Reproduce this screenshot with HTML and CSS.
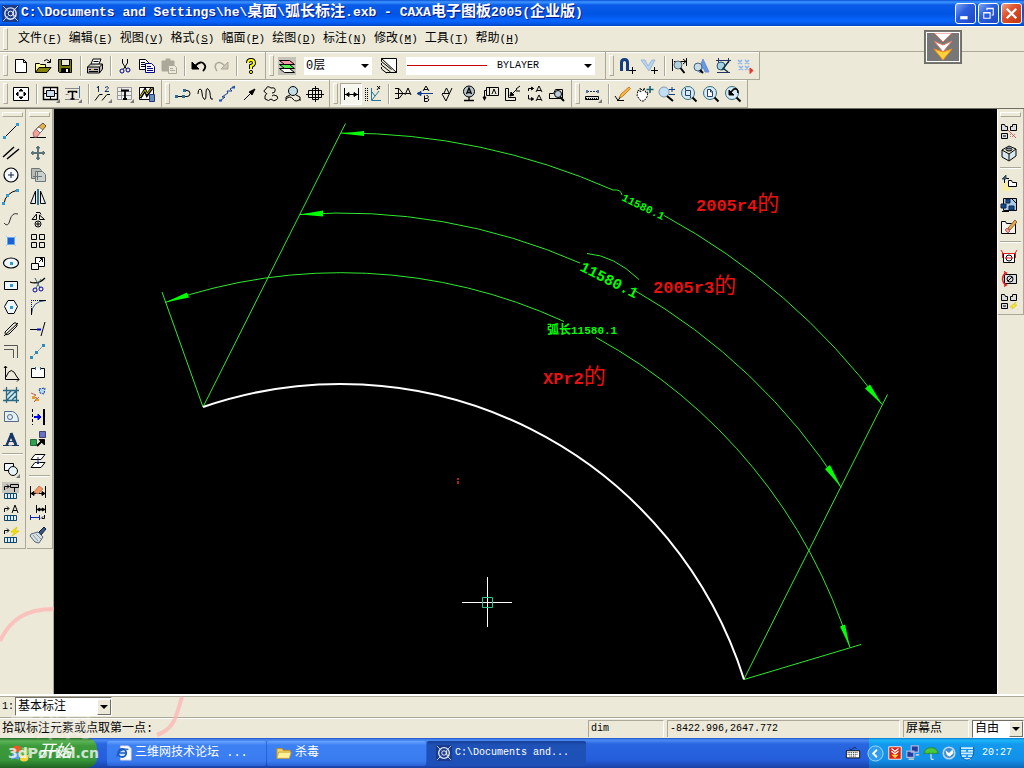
FILE: index.html
```html
<!DOCTYPE html>
<html lang="zh-CN">
<head>
<meta charset="utf-8">
<title>CAXA电子图板2005(企业版)</title>
<link rel="stylesheet" href="styles.css">
</head>
<body>
<div class="app">
<header class="titlebar">
  <svg class="logo" viewBox="0 0 18 18"><rect width="18" height="18" fill="#1a3a8a" stroke="none"/><path d="M1 1l5 5M17 1l-5 5M1 17l5-5M17 17l-5-5" stroke="#c8d4f0"/><circle cx="9" cy="9" r="6" stroke="#dfe6fa" stroke-width="1.500"/><circle cx="9" cy="9" r="2.500" stroke="#fff"/><path d="M12 6v5l3 1" stroke="#fff"/></svg>
  <h1>C:\Documents and Settings\he\<span>桌面</span>\<span>弧长标注</span>.exb - CAXA<span>电子图板</span>2005(<span>企业版</span>)</h1>
  <div class="winbtns">
    <button aria-label="最小化"><svg viewBox="0 0 18 18"><path d="M4 13h7" stroke="#fff" stroke-width="3"/></svg></button>
    <button aria-label="还原"><svg viewBox="0 0 18 18"><path d="M4.500 8.500h6v5h-6zM4 8h7M7.500 6V4.500h6v6H12M7 4h7" stroke="#fff"/></svg></button>
    <button class="close" aria-label="关闭"><svg viewBox="0 0 18 18"><path d="M4.500 4.500l9 9M13.500 4.500l-9 9" stroke="#fff" stroke-width="2.200"/></svg></button>
  </div>
</header>

<nav class="menubar">
  <button>文件<i>(<u>F</u>)</i></button><button>编辑<i>(<u>E</u>)</i></button><button>视图<i>(<u>V</u>)</i></button><button>格式<i>(<u>S</u>)</i></button><button>幅面<i>(<u>P</u>)</i></button><button>绘图<i>(<u>D</u>)</i></button><button>标注<i>(<u>N</u>)</i></button><button>修改<i>(<u>M</u>)</i></button><button>工具<i>(<u>T</u>)</i></button><button>帮助<i>(<u>H</u>)</i></button>
</nav>

<div class="toolrow">
  <div class="toolbar">
    <button aria-label="新建"><svg viewBox="0 0 18 18"><path d="M3.500 2.500h8l3 3v10h-11zM11.500 2.500v3h3" fill="#fff"/></svg></button>
    <button aria-label="打开"><svg viewBox="0 0 18 18"><path d="M1.500 15V6.500h4l1 1h5V10" fill="#ffff9c"/><path d="M1.500 15.500L5 10.500h12l-4 5z" fill="#848200"/><path d="M10 4q3-3 5 0l1 1M16.500 2v3.500H13"/></svg></button>
    <button aria-label="保存"><svg viewBox="0 0 18 18"><path d="M2.500 2.500h13v13h-12l-1-1z" fill="#7b7b00"/><path d="M5.500 2.500h8v6h-8z" fill="#ece9d8"/><path d="M5.500 11.500h8v4h-8z" fill="#000"/><path d="M11 12v3" stroke="#fff" stroke-width="2"/></svg></button>
    <b class="sep"></b>
    <button aria-label="打印"><svg viewBox="0 0 18 18"><path d="M5 7l2-5h8l-2 5" fill="#fff"/><path d="M1.500 10l3-3h12v5l-3 4h-12zM1.500 10h12l3-3M13.500 10v6" fill="#bbb"/><path d="M3 12.500h9M7.500 4.500h5M3 14.500h9"/><path d="M5 12.500h3" stroke="#ec0"/></svg></button>
    <b class="sep"></b>
    <button aria-label="剪切"><svg viewBox="0 0 18 18"><path d="M6.500 2v4l4 6M11.500 2v4l-4 6"/><circle cx="6" cy="14" r="2" stroke="#008"/><circle cx="12" cy="13" r="2" stroke="#008"/></svg></button>
    <button aria-label="复制"><svg viewBox="0 0 18 18"><path d="M1.500 2.500h6l3 3v7h-9z" fill="#fff"/><path d="M3 5.500h4M3 7.500h5M3 9.500h5"/><path d="M7.500 6.500h6l3 3v6h-9z" fill="#fff" stroke="#008"/><path d="M9 9.500h4M9 11.500h6M9 13.500h6" stroke="#008"/></svg></button>
    <button aria-label="粘贴" disabled><svg viewBox="0 0 18 18"><path d="M2 4h12v10H2zM6 2h4v3H6z" fill="#aca899" stroke="#aca899"/><path d="M8.500 8.500h6l2 2v6h-8z" fill="#ece9d8" stroke="#aca899"/><path d="M10 11.500h3M10 13.500h5" stroke="#aca899"/></svg></button>
    <b class="sep"></b>
    <button aria-label="撤销"><svg viewBox="0 0 18 18"><path d="M5 9q6-6 9-2 3 3-1 7" stroke-width="1.800"/><path d="M2 5v7h7z" fill="#000"/></svg></button>
    <button aria-label="重做" disabled><svg viewBox="0 0 18 18"><path d="M13 9Q7 3 4 7q-2 3 1 7" stroke="#aca899" stroke-width="1.500"/><path d="M16 5v7H9z" fill="#ccc8b8" stroke="#aca899"/></svg></button>
    <b class="sep"></b>
    <button aria-label="帮助"><svg viewBox="0 0 18 18"><path d="M6 6q0-3 3-3t3 3q0 2-3 3v3" stroke-width="4"/><path d="M6 6q0-3 3-3t3 3q0 2-3 3v3" stroke="#ff0" stroke-width="2"/><circle cx="9" cy="15" r="1.600" fill="#ff0"/></svg></button>
  </div>
  <div class="toolbar">
    <button aria-label="图层"><svg viewBox="0 0 18 18"><path d="M0 0h18v18H0z" fill="#c5c2b8" stroke="none"/><path d="M1.500 11.500h10l5 4h-10z" fill="#fff"/><path d="M1.500 7.500h10l5 4h-10z" fill="#5e5"/><path d="M1.500 3.500h10l5 4h-10z" fill="#f9a"/></svg></button>
    <span class="combo layer"><select aria-label="当前层"><option>0层</option></select><span class="arrow"></span></span>
    <button aria-label="线型"><svg viewBox="0 0 18 18"><path d="M1.500 1.500h15v14z" fill="#fff"/><path d="M1.500 1.500v3l10 8M1.500 6v2l9 7M1.500 10v2l5 4M6 15.500h10.500"/></svg></button>
    <span class="combo line"><select aria-label="当前线型"><option>BYLAYER</option></select><span class="sample"></span><span class="arrow"></span></span>
  </div>
  <div class="toolbar">
    <button aria-label="捕捉设置"><svg viewBox="0 0 18 18"><path d="M3.500 14V5.500q0-3 3-3t3 3V14" stroke="#123c80" stroke-width="3"/><path d="M14.500 10v7M11 13.500h7"/></svg></button>
    <button aria-label="拾取过滤"><svg viewBox="0 0 18 18"><path d="M1 3h4l3 6 4-6h3l-6 11z" fill="#b8d4f2" stroke="#9ab8d8"/><path d="M14.500 10v7M11 13.500h7"/></svg></button>
    <b class="sep"></b>
    <button aria-label="标注风格"><svg viewBox="0 0 18 18"><path d="M2.500 2v12M16.500 1v8M4 4.500h12M13 2l3 2.500-3 2.500"/><circle cx="8" cy="8" r="4" fill="#b4d0dc" stroke="#567"/><path d="M10.500 11l4 5" stroke-width="2"/></svg></button>
    <button aria-label="文本风格"><svg viewBox="0 0 18 18"><path d="M6 14l5-12 6 13h-4l-2-5-3 6z" fill="#6c96dd" stroke="#6a90d8"/><circle cx="6" cy="10" r="4" fill="#c5dce8" stroke="#467"/><path d="M8 13l3 3" stroke-width="2"/></svg></button>
    <button aria-label="剖面图案"><svg viewBox="0 0 18 18"><path d="M2 3.500h15M3 15.500h13M4.500 1v5M14.500 1v5" stroke="#236"/><circle cx="7" cy="9" r="4" fill="#a9d3df" stroke="#257"/><path d="M15 4L8 13M10 12l4 3" stroke-width="1.500" stroke="#134"/></svg></button>
    <button aria-label="点样式"><svg viewBox="0 0 18 18"><path d="M2 3l4 4M6 3L2 7M9 3l4 4M13 3L9 7M3 9l4 4M7 9l-4 4M9 9l4 4M13 9l-4 4" stroke="#8fb6ee" stroke-width="1.700"/><path d="M14 11l3 2.500-3 3z" fill="#e32" stroke="#e32"/></svg></button>
  </div>
</div>

<div class="toolrow">
  <div class="toolbar">
    <button aria-label="图幅设置"><svg viewBox="0 0 18 18"><path d="M1.500 2.500h15v13h-15z" fill="#fff"/><path d="M7 6l2-2 2 2zM7 12l2 2 2-2zM6 7L4 9l2 2zM12 7l2 2-2 2z" fill="#000"/></svg></button>
    <b class="sep"></b>
    <button aria-label="调入图框"><svg viewBox="0 0 18 18"><path d="M1.500 2.500h14v12h-14z" fill="#fff" stroke-width="1.500"/><path d="M8.500 2v4M8.500 11v4M1 8.500h4M12 8.500h4"/><path d="M4.500 5.500h8v6h-8z" fill="#cde"/><path d="M14 18h4v-4z" fill="#777" stroke="none"/></svg></button>
    <button aria-label="标题栏"><svg viewBox="0 0 18 18"><path d="M1 3.500h14M1 14.500h14M1.500 9.500h3" stroke="#888"/><path d="M4 6.500h9M8.500 6v8M6.500 14h4M4.500 6v2M12.500 6v2" stroke-width="1.600"/><path d="M15.500 1v12" stroke="#47a"/><path d="M14 18h4v-4z" fill="#777" stroke="none"/></svg></button>
    <b class="sep"></b>
    <button aria-label="零件序号"><svg viewBox="0 0 18 18"><path d="M4.500 1v6M3 3l1.500-2M11 2.500q4-2 3 1l-3 3h4" stroke="#136"/><path d="M1 15.500L5.500 9.500h3M8 15.500l5-6h3"/><path d="M14 18h4v-4z" fill="#777" stroke="none"/></svg></button>
    <button aria-label="明细表"><svg viewBox="0 0 18 18"><path d="M1.500 2.500h14v12h-14zM1 6.500h15M1 10.500h15M5.500 2v12" fill="#eee" stroke="#999"/><path d="M5 5.500h8M9 5v9M7 14h4" stroke-width="1.800"/><path d="M14 18h4v-4z" fill="#777" stroke="none"/></svg></button>
    <button aria-label="背景设置"><svg viewBox="0 0 18 18"><path d="M1.500 2.500h14v12h-14z" fill="#fff"/><path d="M2 13l5-8 2 5 5-7" stroke-width="3"/><path d="M2 12l5-7 2 4 5-6" stroke="#d8d020"/><path d="M11.500 9.500h5v7h-5z" fill="#678fbd" stroke="#237"/></svg></button>
  </div>
  <div class="toolbar">
    <button aria-label="公切线"><svg viewBox="0 0 18 18"><path d="M2 11.500h11q3 0 3-3t-3-3H9"/><path d="M1 10h3v3H1zM8 10h3v3H8zM9 4h3v3H9z" fill="#2a6f9a" stroke="none"/></svg></button>
    <button aria-label="波浪线"><svg viewBox="0 0 18 18"><path d="M2 9q0-5 2-5t2 4 2 6 2-5 2-5 2 4 1 6h2"/></svg></button>
    <button aria-label="双折线"><svg viewBox="0 0 18 18"><path d="M2 16l5-4H4l6-4-1-2 5 0-2-2 5-3" stroke="#123c90"/><path d="M1 15.500h3M14 2.500h3" stroke="#2453b4" stroke-width="2"/></svg></button>
    <button aria-label="箭头"><svg viewBox="0 0 18 18"><path d="M4 15l8-8"/><path d="M15 4l-3 6-3-3z" fill="#000"/></svg></button>
    <button aria-label="云线"><svg viewBox="0 0 18 18"><path d="M4 8Q0 6 4 4q1-4 5-1 5-1 4 3 0 2-3 2M5 8q-3 3-2 6 4 3 6 0 3 3 5 1 3-1 1-4-4-2-5 0"/></svg></button>
    <button aria-label="局部放大"><svg viewBox="0 0 18 18"><circle cx="9" cy="6" r="4.500" fill="#c2dce8"/><path d="M6 10l-4 2v4M12 10l4 2v4M2 14q4-4 7 0t7 0"/></svg></button>
    <button aria-label="轴孔"><svg viewBox="0 0 18 18"><path d="M2.500 5.500h13v7h-13zM6.500 3.500h6v11h-6z"/><path d="M0 9.500h18M9.500 1v16"/></svg></button>
  </div>
  <div class="toolbar">
    <button class="on" aria-label="尺寸标注"><svg viewBox="0 0 18 18"><path d="M2.500 3v12M16.500 3v12M3 9.500h13"/><path d="M4 9.500l3-2v4zM15 9.500l-3-2v4z" fill="#000"/></svg></button>
    <button aria-label="坐标标注"><svg viewBox="0 0 18 18"><path d="M1.500 3v13M3.500 3v13" stroke-dasharray="1 1"/><path d="M7.500 3v12.500H17M8 15l7-9M8 7l3 4" stroke="#27779c"/><path d="M13 1l3 3M16 1l-3 4"/></svg></button>
    <b class="sep"></b>
    <button aria-label="倒角标注"><svg viewBox="0 0 18 18"><path d="M1 3.500h4l4 5-4 5H1M4.500 3v11M1 8.500h10M11 10l3-7 3 7M12 8.500h4"/></svg></button>
    <button aria-label="引出说明"><svg viewBox="0 0 18 18"><path d="M2 8.500h15" stroke="#123c90"/><path d="M1 8.500l4-2v4z" fill="#123c90" stroke="#123c90"/><path d="M7 6l3-5 3 5M8 4.500h4M8.500 10.500v6h3q3-2 0-3 2-3-1-3M8 13.500h3"/></svg></button>
    <button aria-label="粗糙度"><svg viewBox="0 0 18 18"><path d="M4 8.500h7M4 9l4 7 6-13M6 8l2.500-5L11 8"/></svg></button>
    <button aria-label="基准代号"><svg viewBox="0 0 18 18"><circle cx="9" cy="6.500" r="5.500" fill="#b5c3cb"/><path d="M6.500 9L9 3l2.500 6M7 7.500h4M9 12v3M4 15.500h10" stroke-width="1.300"/></svg></button>
    <button aria-label="形位公差"><svg viewBox="0 0 18 18"><path d="M4.500 2.500h12v8h-12zM7.500 10V3M10 9l2-5 2 5M4 5.500H2.500v10"/><path d="M1 12l1.500 3L4 12z" fill="#000"/></svg></button>
    <button aria-label="焊接符号"><svg viewBox="0 0 18 18"><path d="M1.500 3.500v12h10v-3h-7v-9zM7 10l6-6M12 4l4-3M12 6h4"/><path d="M6 11l1-4 3 3z" fill="#000"/></svg></button>
    <button aria-label="剖切符号"><svg viewBox="0 0 18 18"><path d="M2.500 6V3.500h5M2.500 10v4h5M10 7l3-6 3 6M11 5.500h4M10 16l3-6 3 6M11 14.500h4"/><path d="M5.500 2l2 1.500-2 1.500zM5.500 12.500l2 1.500-2 1.500z" fill="#000"/></svg></button>
    <button aria-label="标注编辑"><svg viewBox="0 0 18 18"><path d="M1.500 13.500v-5h4l2-4h7v9M1 13.500h12"/><circle cx="10" cy="9" r="3.500" fill="#bcd"/><path d="M12 12l4 4" stroke-width="2"/></svg></button>
  </div>
  <div class="toolbar">
    <button aria-label="查询"><svg viewBox="0 0 18 18"><path d="M3 6.500h11" stroke-dasharray="2 1" stroke="#135"/><path d="M2 5h2v3H2zM13 5h2v3h-2z" fill="#579" stroke="none"/><path d="M1.500 11.500h13v3h-13z" fill="#ddd"/><path d="M2 13.500h12" stroke-dasharray="1 1"/><path d="M14 18h4v-4z" fill="#777" stroke="none"/></svg></button>
    <b class="sep"></b>
    <button aria-label="重画"><svg viewBox="0 0 18 18"><path d="M5 13l2-4 8-7 1.500 1.500-8 8z" fill="#ffb638" stroke="#c08030"/><path d="M1 11l3 4.500 2-3M3 15.500h7"/></svg></button>
    <button aria-label="平移"><svg viewBox="0 0 18 18"><path d="M2 5l3 2-1-4 3 3 1-3 2 5 2-1-1 5-3 4H5l-4-5z" fill="#fff" stroke-dasharray="2 1"/><path d="M14 1v7M10.500 4.500h7" stroke="#176070" stroke-width="1.600"/></svg></button>
    <button aria-label="动态缩放"><svg viewBox="0 0 18 18"><circle cx="6" cy="7" r="5" fill="#c2def4" stroke="#89a"/><path d="M9 11l6 5" stroke-width="2"/><path d="M11 4.500h6M14 2v5M11 9.500h6" stroke="#113c80"/></svg></button>
    <button aria-label="窗口放大"><svg viewBox="0 0 18 18"><circle cx="8" cy="8" r="6.500" fill="#d8eaf5" stroke="#357080"/><path d="M5.500 5.500h5v5h-5zM5.500 5V3M10.500 11v2" stroke="#246"/><path d="M12.500 12.500l4 4" stroke-width="2"/></svg></button>
    <button aria-label="显示全部"><svg viewBox="0 0 18 18"><circle cx="8" cy="8" r="6.500" fill="#d8eaf5" stroke="#357080"/><path d="M5.500 4.500h3l2 2v5h-5zM8.500 4v3h2" fill="#fff" stroke="#246"/><path d="M12.500 12.500l4 4" stroke-width="2"/></svg></button>
    <button aria-label="显示回溯"><svg viewBox="0 0 18 18"><circle cx="8" cy="8" r="6.500" fill="#d8eaf5" stroke="#357080"/><path d="M6 8l4-4q4-1 4 4" stroke-width="1.600"/><path d="M5 5v5h5z" fill="#000"/><path d="M12.500 12.500l4 4" stroke-width="2"/></svg></button>
  </div>
</div>

<main class="work">
  <div class="side">
    <div class="column">
      <button aria-label="直线"><svg viewBox="0 0 18 18"><path d="M3 15L15 3"/><path d="M1 14h3v3H1zM14 1h3v3h-3z" fill="#2e9bd8" stroke="none"/></svg></button>
      <button aria-label="平行线"><svg viewBox="0 0 18 18"><path d="M1 13L12 3M5 15L17 5" stroke-width="1.500"/></svg></button>
      <button aria-label="圆"><svg viewBox="0 0 18 18"><circle cx="9" cy="9" r="7" fill="#f7fbff" stroke-width="1.200"/><path d="M9 6v6M6 9h6" stroke="#124"/></svg></button>
      <button aria-label="圆弧"><svg viewBox="0 0 18 18"><path d="M2 16Q3 5 16 2"/><path d="M0 14h3v3H0zM4 6h3v3H4zM14 1h3v3h-3z" fill="#2e9bd8" stroke="none"/></svg></button>
      <button aria-label="样条"><svg viewBox="0 0 18 18"><path d="M2 13q4 5 6-3t8-6" stroke="#333"/></svg></button>
      <button aria-label="点"><svg viewBox="0 0 18 18"><path d="M4 4l10 10M14 4L4 14" stroke="#9cc8f2"/><path d="M5.500 5.500h7v7h-7z" fill="#1762d6" stroke="#69a8ee"/></svg></button>
      <button aria-label="椭圆"><svg viewBox="0 0 18 18"><ellipse cx="9" cy="9" rx="7.500" ry="5" fill="#eef7ff" stroke-width="1.200"/><path d="M8 8h3v3H8z" fill="#39c" stroke="none"/></svg></button>
      <button aria-label="矩形"><svg viewBox="0 0 18 18"><path d="M2.500 5.500h13v8h-13z" fill="#eef7ff"/><path d="M8 8h3v3H8z" fill="#39c" stroke="none"/></svg></button>
      <button aria-label="正多边形"><svg viewBox="0 0 18 18"><path d="M6 2.500h6l3.500 6-3.500 7H6l-3.500-7z" fill="#eef7ff"/><path d="M8 8h3v3H8z" fill="#39c" stroke="none"/></svg></button>
      <button aria-label="中心线"><svg viewBox="0 0 18 18"><path d="M3 12l9-9q3-1 3 3l-8 8q-4 2-4-2zM2 16L16 3"/></svg></button>
      <button aria-label="等距线"><svg viewBox="0 0 18 18"><path d="M2 3.500h13.500V16M2 7.500h9.500V16" stroke="#555"/></svg></button>
      <button aria-label="公式曲线"><svg viewBox="0 0 18 18"><path d="M3.500 2v13.500H17M4 13q5-13 11 0M2 4l1.500-2L5 4M15 13l2 2.500-2 2"/></svg></button>
      <button aria-label="剖面线"><svg viewBox="0 0 18 18"><path d="M4 4h11v10H4z" fill="#cfe9ef" stroke="none"/><path d="M1 4.500h16M1 14.500h16M4.500 1v16M14.500 1v16M5 9l4-4M5 14l9-9M10 14l4-4" stroke="#2c6680" stroke-width="1.300"/></svg></button>
      <button aria-label="填充"><svg viewBox="0 0 18 18"><path d="M2.500 3.500h8q6 2 6 10h-14z" fill="#e4f1f4" stroke="#568"/><circle cx="8" cy="9" r="2.500" stroke="#568"/></svg></button>
      <button aria-label="文字"><svg viewBox="0 0 18 18"><path d="M4 15L9 3l5 12z" fill="#173568" stroke="#173568"/><path d="M6 15l3-7 1.500 3h-3l5 0 .5 4z" fill="#ece9d8" stroke="none"/><path d="M6 11.500h6" stroke="#173568"/><path d="M1 15.500h6M10 15.500h7" stroke="#173568"/><path d="M9 3l5 12" stroke="#173568" stroke-width="3"/></svg></button>
      <b class="rule"></b>
      <button aria-label="块生成"><svg viewBox="0 0 18 18"><path d="M2.500 3.500h9v7h-9z" fill="#eef7ff"/><circle cx="11" cy="11" r="4.500" fill="#e5f2f8"/><path d="M14 18h4v-4z" fill="#777" stroke="none"/></svg></button>
      <button aria-label="块消隐"><svg viewBox="0 0 18 18"><path d="M0 0h17v11H0z" fill="#c9c7bd" stroke="none"/><path d="M2.500 8V4.500h5M5 2.500l2 2-2 2M8.500 2.500h8v3h-8zM12.500 6v4"/><path d="M2.500 11.500h12v5h-12z" fill="#def" stroke="#146"/><path d="M5.500 12v4M8.500 12v4M11.500 12v4" stroke="#147"/></svg></button>
      <button aria-label="块属性"><svg viewBox="0 0 18 18"><path d="M2.500 8V4.500h4M5 2.500l2 2-2 2M10 9l3-8 3 8M11 6.500h4"/><path d="M2.500 11.500h12v5h-12z" fill="#def" stroke="#146"/><path d="M5.500 12v4M8.500 12v4M11.500 12v4" stroke="#147"/></svg></button>
      <button aria-label="块编辑"><svg viewBox="0 0 18 18"><path d="M2.500 8V4.500h4M5 2.500l2 2-2 2"/><path d="M15 1l-6 5h4l-3 4 7-5h-4z" fill="#fe0" stroke="#dc0"/><path d="M2.500 11.500h12v5h-12z" fill="#def" stroke="#146"/><path d="M5.500 12v4M8.500 12v4M11.500 12v4" stroke="#147"/></svg></button>
    </div>
    <div class="column">
      <button aria-label="删除"><svg viewBox="0 0 18 18"><path d="M1 15.500h16"/><path d="M4 11l3-4 4 4-3 4H5z" fill="#f3a0a0" stroke="#a66"/><path d="M7 7l7-6 3 3-6 7z" fill="#e8b040" stroke="#654"/><path d="M7 7l3-2 4 3-3 3z" fill="#fff" stroke="#777"/></svg></button>
      <button aria-label="平移复制"><svg viewBox="0 0 18 18"><path d="M9 3v12M3 9h12" stroke="#5c7476" stroke-width="2"/><path d="M7 4l2-2 2 2zM7 14l2 2 2-2zM4 7L2 9l2 2zM14 7l2 2-2 2z" fill="#5c7476" stroke="#5c7476"/></svg></button>
      <button aria-label="复制选择"><svg viewBox="0 0 18 18"><path d="M2.500 2.500h8l2 2v8h-10z" fill="#b9bab2" stroke="#6b7678"/><path d="M6.500 5.500h7l3 3v7h-10z" fill="#ccd0ca" stroke="#6b7678"/><path d="M8.500 6v8M4 10.500h9" stroke="#6b7678"/></svg></button>
      <button aria-label="镜像"><svg viewBox="0 0 18 18"><path d="M6.500 3v12.500h-5zM11.500 3v12.500h5z" fill="#e8eef0"/><path d="M9 1v16" stroke="#27779c" stroke-width="2"/></svg></button>
      <button aria-label="旋转"><svg viewBox="0 0 18 18"><path d="M7.500 4v5.500H3zM10.500 5l5 4.500h-5zM7 2.500h4l1 2"/><circle cx="9" cy="14" r="3"/><path d="M7 14h4M9 12v4"/></svg></button>
      <button aria-label="阵列"><svg viewBox="0 0 18 18"><path d="M2.500 2.500h5v5h-5zM10.500 2.500h5v5h-5zM2.500 10.500h5v5h-5zM10.500 10.500h5v5h-5z"/></svg></button>
      <button aria-label="比例缩放"><svg viewBox="0 0 18 18"><path d="M6.500 3.500h9v9h-9z" fill="#fff"/><path d="M2.500 9.500h7v6h-7z" fill="#f4f4ee"/><path d="M10 8l3-3M11 4.500h2.500V8"/></svg></button>
      <button aria-label="裁剪"><svg viewBox="0 0 18 18"><path d="M1 6q8 3 15-4" stroke-width="1.300"/><path d="M6 2l5 10M12 3L7 12" stroke="#467"/><circle cx="6" cy="14" r="2" stroke="#00a"/><circle cx="12" cy="13" r="2" stroke="#00a"/></svg></button>
      <button aria-label="过渡"><svg viewBox="0 0 18 18"><path d="M2.500 2v7M2 2.500h7" stroke-dasharray="1 1" stroke="#00a"/><path d="M2.500 16Q3 3 17 2.500" stroke="#27558c"/><path d="M2.500 10v7M10 2.500h7"/></svg></button>
      <button aria-label="齐边"><svg viewBox="0 0 18 18"><path d="M1 9.500h7"/><path d="M8 9.500h4" stroke="#00d" stroke-width="2"/><path d="M12 16l4-14"/></svg></button>
      <button aria-label="拉伸"><svg viewBox="0 0 18 18"><path d="M2 16L15 3" stroke="#58a" stroke-dasharray="3 1"/><path d="M1 14h3v3H1zM6 9h3v3H6zM13 2h3v3h-3z" fill="#2e8bba" stroke="none"/></svg></button>
      <button aria-label="打断"><svg viewBox="0 0 18 18"><path d="M7 4.500H2.500v9h13v-9H11" fill="#fff"/><path d="M6.500 3v3M11.500 3v3" stroke="#27a"/></svg></button>
      <button aria-label="打散"><svg viewBox="0 0 18 18"><path d="M10 3l6-1-1 6-4-1z" fill="#adf" stroke="#23a" stroke-dasharray="2 1"/><path d="M2 7l5 2-3 2 4 1-3 4 5-5" stroke="#b66"/><path d="M3 10h3v3H3zM7 13h3v2H7z" fill="#e8a020" stroke="none"/></svg></button>
      <button aria-label="局部平移"><svg viewBox="0 0 18 18"><path d="M3.500 1v16" stroke-dasharray="3 2"/><path d="M15 1v16" stroke-width="2"/><path d="M5 9h4" stroke="#00e" stroke-width="2"/><path d="M9 6l3 3-3 3z" fill="#00e" stroke="#00e"/></svg></button>
      <button aria-label="改变颜色"><svg viewBox="0 0 18 18"><path d="M1.500 9.500h6v6h-6z" fill="#2fa04c" stroke="#264"/><path d="M10.500 1.500h6v6h-6z" fill="#6670c8" stroke="#446"/><path d="M8 16l5-5" stroke-width="2"/><path d="M10 9.500h5.500V15z" fill="#000"/></svg></button>
      <button aria-label="改变层"><svg viewBox="0 0 18 18"><path d="M6 2.500h10l-4 5H2zM6 10.500h10l-4 5H2z" fill="#fff"/><path d="M9 5v7M7 10l2 2 2-2" stroke="#238"/></svg></button>
      <b class="rule"></b>
      <button aria-label="标注修改"><svg viewBox="0 0 18 18"><path d="M1.500 4v12M16.500 4v12M2 11.500h14M2 11.500l3-2v4zM16 11.500l-3-2v4z" fill="#000"/><path d="M5 10l5-6 4 3-5 5z" fill="#ed9b62" stroke="#c75"/></svg></button>
      <button aria-label="尺寸驱动"><svg viewBox="0 0 18 18"><path d="M7.500 1v8M16.500 1v8M8 5.500h8M8 5.500l3-1.500v3zM16 5.500L13 4v3z" fill="#000"/><path d="M1.500 11v5M10.500 11v5M2 13.500h8" stroke="#12a"/><path d="M13 14.500h2.500V11M12 14.500l2-2"/></svg></button>
      <button aria-label="格式刷"><svg viewBox="0 0 18 18"><path d="M10 6l5-5 2 2-5 6z" fill="#37568a" stroke="#123"/><path d="M2 8l7-2 5 5-4 6-4-1-5-6z" fill="#d8dfe2" stroke="#567"/><path d="M4 9l5 6M7 8l5 5" stroke="#89a"/></svg></button>
    </div>
  </div>

  <svg class="canvas" viewBox="54 109 943 585" preserveAspectRatio="xMinYMin slice" role="img" aria-label="弧长标注">
    <g class="dims">
      <path d="M203 407L345.500 123.500M744 679L887.500 394.500M203 407L162 292M744 679.500L861 644.500"/>
      <path d="M341 133A673.700 673.700 0 0 1 613 190q8-1 9 5M664 215.500A673.700 673.700 0 0 1 882 404.500"/>
      <path d="M300 214.500A594 594 0 0 1 580 263M634 290A594 594 0 0 1 841 487.500M587 253.500q27 2 52 26"/>
      <path d="M165 302.500A534 534 0 0 1 564 321.500M596 337.500A534 534 0 0 1 850 647.500"/>
    </g>
    <g class="heads">
      <path d="M341 133.500l23-2.500v5zM882 404.500l-17-16 5-4zM300 214.500l23-4v6zM841 487l-16-18 5-4zM165 302.500l22-10 2 5zM850 647.500l-10-21 5-2z"/>
    </g>
    <path class="arc" d="M203 407A423 423 0 0 1 744 679.500"/>
    <text class="dim" transform="translate(621 200) rotate(26)">11580.1</text>
    <text class="dim big" transform="translate(579 270) rotate(27)">11580.1</text>
    <text class="dim" x="547" y="334"><tspan class="han">弧长</tspan>11580.1</text>
    <text class="note" x="696" y="211">2005r4<tspan>的</tspan></text>
    <text class="note" x="653" y="293">2005r3<tspan>的</tspan></text>
    <text class="note" x="543" y="384">XPr2<tspan>的</tspan></text>
    <path class="mark" d="M457 478h2v2h-2zM457 481h2v3h-2z"/>
    <path class="cross" d="M487.500 577v50M462 602.500h50"/>
    <path class="pick" d="M482.500 597.500h10v10h-10z"/>
  </svg>

  <div class="side right">
    <div class="column">
      <button aria-label="提取图符"><svg viewBox="0 0 18 18"><path d="M1.500 2.500h3l1 2h2v4h-6zM10.500 4.500h2v-2h4v6h-6zM1.500 11.500h6v5h-6z" fill="#ddd"/><path d="M3 14h3"/><path d="M8 8l8 8" stroke="#d55"/><path d="M10 12.500h6M10 14.500h6" stroke="#c77" stroke-dasharray="1 1"/></svg></button>
      <button aria-label="构件库"><svg viewBox="0 0 18 18"><path d="M2 6l7-4 7 3v7l-7 5-7-4zM2 6l7 4 7-5M9 10v6" fill="#d7e7ee"/><ellipse cx="9" cy="5.500" rx="3" ry="1.500" fill="#999"/></svg></button>
      <b class="rule"></b>
      <button aria-label="定义图符"><svg viewBox="0 0 18 18"><path d="M3 8h8v9H3z" fill="#f8f0a0" stroke="none"/><path d="M8.500 12.500v-6h3l1 2h4v4z" fill="#fff"/><path d="M4.500 9V4.500H9"/><path d="M2 5l4-4v4z" fill="#356" stroke="#356"/></svg></button>
      <button aria-label="图库管理"><svg viewBox="0 0 18 18"><path d="M3.500 2.500h13v12h-13z" fill="#a9cae8"/><path d="M1 8h5v4H1zM6 3h4v4H6zM9 10h5v4H9z" fill="#124c8a" stroke="#124"/><path d="M2 15.500h7M12 3l4 4"/></svg></button>
      <button aria-label="驱动图符"><svg viewBox="0 0 18 18"><path d="M1.500 15.500v-12h4l1 2h9v10z" fill="#f3f3ed"/><path d="M8 10l7-8 2 2-7 8z" fill="#e8a850" stroke="#963"/><path d="M7 10l3 3-2 2-3-3z" fill="#e99" stroke="#b66"/></svg></button>
      <b class="rule"></b>
      <button aria-label="图库转换"><svg viewBox="0 0 18 18"><path d="M3.500 5.500h11v9h-11z" fill="#fff"/><circle cx="9" cy="10" r="3"/><path d="M1 2l2 3.500h12L17 2M2.500 5v5M15.500 5v5M5 10h8" stroke="#d22"/></svg></button>
      <button aria-label="并入文件"><svg viewBox="0 0 18 18"><path d="M4.500 4.500h12v9h-12z" fill="#ddd"/><circle cx="10" cy="9" r="3"/><path d="M8 11l4-4"/><path d="M5 3Q0 9 5 15M4 1.500L6.500 3 4 5M4 13l2.500 2L4 16.500" stroke="#d22" stroke-width="1.400"/></svg></button>
      <button aria-label="部分存储"><svg viewBox="0 0 18 18"><path d="M1.500 2.500h3l1 2h2v4h-6zM10.500 4.500h2v-2h4v6h-6zM1.500 11.500h6v5h-6z" fill="#ddd"/><path d="M3 14h3"/><path d="M16 10l-6 5h3l-1 2 5-4h-3z" fill="#fe2" stroke="#dc3"/></svg></button>
    </div>
  </div>
</main>

<div class="options">
  <label for="style">1:</label>
  <span class="combo sunken"><select id="style"><option>基本标注</option></select><span class="arrow"></span></span>
</div>

<footer class="status">
  <span class="prompt">拾取标注元素或点取第一点:</span>
  <span class="cell cmd">dim</span>
  <span class="cell coord">-8422.996,2647.772</span>
  <span class="cell mode">屏幕点</span>
  <span class="combo sunken snap"><select aria-label="捕捉方式"><option>自由</option></select><span class="arrow"></span></span>
</footer>

<div class="taskbar">
  <button class="start"><svg viewBox="0 0 20 20"><path d="M2 4q4-3 8 0l-1 6q-4-3-8 0z" fill="#e8592c"/><path d="M11 4q4 3 8 0l-1 6q-4 3-8 0z" fill="#7ac043"/><path d="M1 11q4-3 8 0l-1 6q-4-3-8 0z" fill="#5a9bea"/><path d="M10 11q4 3 8 0l-1 6q-4 3-8 0z" fill="#fbd13c"/></svg>开始</button>
  <button class="task"><svg viewBox="0 0 18 18"><path d="M5 1h9l3 3v13H5z" fill="#fff" stroke="#ccd"/><circle cx="7" cy="9" r="4.500" fill="#cfe4ff" stroke="#1c5ac0" stroke-width="2"/><path d="M3 9h8M1 13Q4 3 14 5" stroke="#1c5ac0" stroke-width="1.500"/></svg>三维网技术论坛 ...</button>
  <button class="task"><svg viewBox="0 0 18 18"><path d="M1 15V4h6l1 2h8v3" fill="#f6d368" stroke="#b98d1c"/><path d="M1 15l2-7h14l-2 7z" fill="#fff09a" stroke="#c99f2c"/></svg>杀毒</button>
  <button class="task active"><svg viewBox="0 0 18 18"><rect width="18" height="18" fill="#1a3a8a" stroke="none"/><path d="M1 1l5 5M17 1l-5 5M1 17l5-5M17 17l-5-5" stroke="#c8d4f0"/><circle cx="9" cy="9" r="6" stroke="#dfe6fa" stroke-width="1.500"/><circle cx="9" cy="9" r="2.500" stroke="#fff"/><path d="M12 6v5l3 1" stroke="#fff"/></svg><i>C:\Documents and...</i></button>
  <div class="lang"><svg viewBox="0 0 18 18"><path d="M5 4q2 3 4 0t4 0" stroke="#124"/><path d="M1.500 6.500h15v8h-15z" fill="#fff"/><path d="M3 8.500h12M3 10.500h12M5 12.500h8" stroke-dasharray="1 1"/></svg></div>
  <div class="tray">
    <svg class="chev" viewBox="0 0 18 18"><circle cx="9" cy="9" r="8" fill="#2f9cf0" stroke="#a5dcff"/><path d="M10.500 5l-4 4 4 4" stroke="#fff" stroke-width="2"/></svg>
    <svg viewBox="0 0 18 18"><path d="M2 2h14v14H2z" fill="#e0200c" stroke="#fff"/><path d="M5 4l4 3 4-3M5 7l4 3 4-3" stroke="#fff" stroke-width="1.500"/><path d="M5 11l4 4 4-4z" fill="#ffd23a" stroke="none"/></svg>
    <svg viewBox="0 0 18 18"><path d="M7 1h8v7H7zM2 7h8v7H2z" fill="#243a9c" stroke="#a9b6dc" stroke-width="1.400"/><path d="M4 16h6M12 11h4" stroke="#bcc" stroke-width="2"/></svg>
    <svg viewBox="0 0 18 18"><path d="M9 6v8q0 3 3 2" stroke="#ddd" stroke-width="1.500"/><path d="M1 10q1-7 8-7t8 7q-2-2-4 0-2-2-4 0-2-2-4 0-2-2-4 0z" fill="#4cc838" stroke="#2a8a24"/></svg>
    <svg viewBox="0 0 18 18"><circle cx="9" cy="9" r="6.500" fill="#3f8fd0" stroke="#b8d4f2" stroke-width="1.800"/><path d="M5 6l4 3 4-4 1 4-4 4q-4 0-5-7z" fill="#fff" stroke="none"/></svg>
    <svg viewBox="0 0 18 18"><path d="M2 3.500h14M2 6.500h6M10 6.500h6M2 9.500h14M3 12.500h5M10 12.500h5M6 15.500h7" stroke="#cfeaff" stroke-width="2"/><path d="M1.500 2v8q1 6 7.500 7 6-1 7.500-7V2" stroke="#125ba8"/></svg>
    <time>20:27</time>
  </div>
</div>

<button class="floater" aria-label="下载"><svg viewBox="0 0 34 30"><path d="M8 1h18l-9 9z" fill="#fff" stroke="#e07860"/><path d="M8 9l9 4 9-4-9 11z" fill="#fff" stroke="#e07860"/><path d="M8 17l9 3 9-3-9 11z" fill="#ffd23a" stroke="#f09020"/></svg></button>
<svg class="scribble" viewBox="0 0 200 140" aria-hidden="true"><path d="M0 41C10 20 25 9 54 9M182 97C176 115 176 128 157 135"/></svg>
<div class="brand" aria-hidden="true"><span>三维网</span><em>3dPortal.cn</em></div>
</div>
</body>
</html>
```
FILE: styles.css
```css
* { box-sizing: border-box; }
body {
  margin: 0;
  font: 12px/16px "Liberation Mono", "Noto Sans CJK SC", monospace;
  color: #000;
}
button, select { font: inherit; color: inherit; }
button { border: 0; background: none; padding: 0; }
i { font-style: normal; font-size: 10px; }
svg { fill: none; stroke: #000; flex: none; }
.app {
  position: relative;
  display: flex;
  flex-direction: column;
  height: 100vh;
  background: #ece9d8;
  overflow: hidden;
}

/* title bar */
.titlebar {
  display: flex;
  align-items: center;
  height: 26px;
  flex: none;
  padding: 0 2px;
  gap: 2px;
  background: linear-gradient(#0a52d8, #3d95ff 2px, #0a5ce8 5px, #0054e3 14px, #0866ff 21px, #0050d8 25px, #003db0);
}
.titlebar .logo { width: 17px; height: 17px; }
.titlebar h1 {
  margin: 0;
  flex: 1;
  font-size: 13px;
  line-height: 26px;
  color: #fff;
  white-space: nowrap;
  text-shadow: 1px 1px #0a1883;
}
.titlebar h1 span { font-size: 15px; }
.winbtns { display: flex; gap: 2px; }
.winbtns button {
  display: flex;
  width: 21px;
  height: 21px;
  border: 1px solid #fff;
  border-radius: 3px;
  background: linear-gradient(135deg, #7ea4f5, #2b5fe0 40%, #1c46c4);
}
.winbtns svg { width: 19px; height: 19px; }
.winbtns .close { background: linear-gradient(135deg, #f0a080, #e0512c 40%, #c03510); }

/* menu */
.menubar {
  display: flex;
  gap: 7px;
  height: 26px;
  flex: none;
  padding-left: 3px;
  align-items: center;
  border-top: 1px solid #fff;
  border-bottom: 1px solid #aca899;
}
.menubar::before {
  content: "";
  width: 3px;
  height: 20px;
  margin-right: 3px;
  border: 1px solid #fff;
  border-right-color: #aca899;
  border-bottom-color: #aca899;
}
.menubar button { white-space: nowrap; }
.menubar i { font-size: 11px; }

/* toolbars */
.toolrow { display: flex; flex: none; height: 28px; }
.toolbar {
  position: relative;
  display: flex;
  align-items: center;
  padding: 0 3px 0 10px;
  border: 1px solid #aca899;
  border-width: 0 1px 1px 0;
  box-shadow: inset 0 1px #fff;
}
.toolbar::before {
  content: "";
  position: absolute;
  left: 3px;
  top: 3px;
  bottom: 3px;
  width: 3px;
  border: 1px solid #fff;
  border-right-color: #aca899;
  border-bottom-color: #aca899;
}
.toolbar > button, .column > button {
  display: flex;
  align-items: center;
  justify-content: center;
  width: 22px;
  height: 22px;
}
.toolbar svg, .column svg { width: 18px; height: 18px; }
.toolbar .on { border: 1px solid #aca899; border-right-color: #fff; border-bottom-color: #fff; background: #f6f5ee; }
.sep {
  width: 2px;
  height: 20px;
  margin: 0 2px 0 4px;
  border-left: 1px solid #aca899;
  border-right: 1px solid #fff;
}

/* drop-downs */
.combo { display: grid; height: 18px; background: #fff; align-items: center; }
.combo select {
  grid-area: 1 / 1;
  appearance: none;
  width: 100%;
  height: 100%;
  border: 0;
  border-radius: 0;
  padding: 0 16px 0 2px;
  background: none;
}
.combo .arrow {
  grid-area: 1 / 1;
  justify-self: end;
  display: flex;
  align-items: center;
  justify-content: center;
  width: 14px;
  height: 16px;
  background: #fff;
  pointer-events: none;
}
.arrow::after {
  content: "";
  border: 4px solid transparent;
  border-top-color: #000;
  border-bottom: 0;
}
.layer { width: 68px; margin: 0 6px; }
.line { width: 189px; margin: 0 7px 0 6px; }
.line select { padding-left: 91px; font-size: 10px; }
.sample { grid-area: 1 / 1; width: 80px; height: 1px; margin-left: 1px; background: #c80000; pointer-events: none; }
.sunken { border: 1px solid #716f64; border-right-color: #fff; border-bottom-color: #fff; }
.sunken .arrow { background: #ece9d8; border: 1px solid #fff; border-right-color: #716f64; border-bottom-color: #716f64; }

/* work area */
.work { display: flex; flex: 1; min-height: 0; border-top: 1px solid #716f64; }
.side { display: flex; flex: none; width: 54px; gap: 1px; border-right: 1px solid #aca899; align-items: flex-start; }
.column {
  width: 26px;
  padding-bottom: 2px;
  border-right: 1px solid #aca899;
  border-bottom: 1px solid #aca899;
}
.column::before {
  content: "";
  display: block;
  height: 3px;
  margin: 3px 2px;
  border: 1px solid #fff;
  border-right-color: #aca899;
  border-bottom-color: #aca899;
}
.rule {
  display: block;
  height: 2px;
  margin: 3px 2px;
  border-top: 1px solid #aca899;
  border-bottom: 1px solid #fff;
}
.right { width: 27px; border-right: 0; border-left: 1px solid #fff; }
.canvas { flex: 1; min-width: 0; height: 100%; background: #000; }
.dims { stroke: #2fe82f; }
.heads { fill: #0f0; stroke: none; }
.arc { stroke: #fff; stroke-width: 2; }
.canvas text { stroke: none; font-weight: bold; }
.dim { fill: #0f0; font-size: 11px; }
.big { font-size: 15px; }
.han { font-size: 12px; }
.note { fill: #e81010; font-size: 17px; }
.note tspan { font-size: 22px; font-weight: normal; }
.mark { fill: #a22; stroke: none; }
.cross { stroke: #fff; }
.pick { stroke: #2fc88a; }

/* option and status bars */
.options {
  display: flex;
  flex: none;
  align-items: center;
  gap: 1px;
  height: 24px;
  padding-left: 2px;
  border-top: 2px solid #fff;
  border-bottom: 1px solid #aca899;
  box-shadow: inset 0 1px #aca899;
}
.options label { font-size: 10px; }
.options .combo { width: 97px; height: 19px; }
.status {
  display: flex;
  flex: none;
  align-items: center;
  gap: 3px;
  height: 20px;
  padding-left: 2px;
  border-top: 1px solid #fff;
  white-space: nowrap;
}
.prompt { flex: 1; }
.cell {
  height: 17px;
  padding-left: 2px;
  border-left: 1px solid #aca899;
  border-top: 1px solid #aca899;
  border-right: 1px solid #fff;
}
.cmd { width: 76px; font-size: 10px; }
.coord { width: 233px; font-size: 10px; }
.mode { width: 66px; }
.snap { width: 52px; }

/* taskbar */
.taskbar {
  display: flex;
  flex: none;
  align-items: center;
  gap: 1px;
  height: 30px;
  color: #fff;
  background: linear-gradient(#1f52c0, #4a8cf5 2px, #2a66e0 6px, #245edb 22px, #1941a5);
}
.start {
  display: flex;
  align-items: center;
  gap: 7px;
  align-self: stretch;
  width: 97px;
  margin-right: 9px;
  padding-left: 11px;
  border-radius: 0 10px 10px 0;
  font-size: 17px;
  font-style: italic;
  background: linear-gradient(#2d6b2b, #5bb456 3px, #3c9a3a 8px, #37963a 22px, #1f6322);
}
.start svg { width: 20px; height: 20px; stroke: none; }
.task {
  display: flex;
  align-items: center;
  gap: 3px;
  width: 159px;
  height: 25px;
  padding-left: 9px;
  border-radius: 2px;
  white-space: nowrap;
  background: linear-gradient(#6ba4ff, #3c81f3 4px, #3a7cf0 20px, #2b62d4);
}
.task svg { width: 16px; height: 16px; }
.active { background: linear-gradient(#173d98, #1e52b7 4px, #1e50b8); }
.lang { margin-left: auto; padding-right: 7px; display: flex; }
.lang svg { width: 16px; height: 16px; }
.tray {
  display: flex;
  align-items: center;
  align-self: stretch;
  gap: 2px;
  width: 155px;
  background: linear-gradient(#0c78d0, #1cb8f8 2px, #129aee 6px, #1290e8 22px, #0d68b8);
}
.tray svg { width: 16px; height: 16px; }
.tray .chev { width: 17px; height: 17px; margin: 0 1px 0 -2px; }
.tray time { margin-left: 5px; font-size: 10px; }

/* items floating above the window */
.floater {
  position: absolute;
  top: 30px;
  right: 62px;
  display: flex;
  width: 38px;
  height: 34px;
  padding: 1px;
  border: 1px solid #716f64;
  background: #777;
  outline: 1px solid #fff;
  outline-offset: -3px;
}
.floater svg { width: 34px; height: 30px; }
.scribble { position: absolute; left: 0; bottom: 28px; width: 200px; height: 140px; pointer-events: none; }
.scribble path { stroke: #ffb4b4; stroke-width: 4; opacity: .75; }
.brand {
  position: absolute;
  left: 8px;
  bottom: 6px;
  display: flex;
  flex-direction: column;
  color: #fff;
  opacity: .75;
  pointer-events: none;
}
.brand span { font-size: 28px; line-height: 28px; font-weight: bold; opacity: .4; }
.brand em { font: bold 14px/18px "DejaVu Sans", sans-serif; }
```
